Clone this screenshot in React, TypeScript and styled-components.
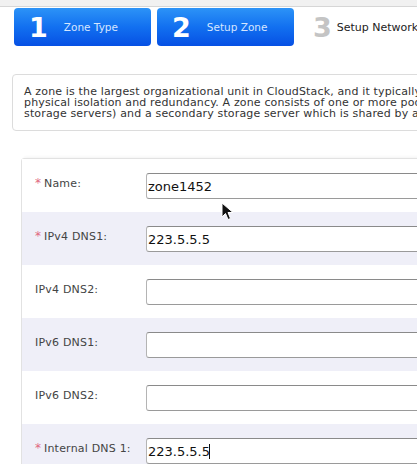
import React from "react";
import styled, { createGlobalStyle } from "styled-components";

const GlobalStyle = createGlobalStyle`
    html, body {
        margin: 0;
        padding: 0;
        background: #fff;
        overflow: hidden;
    }
    body {
        font-family: "DejaVu Sans", "Liberation Sans", sans-serif;
    }
`;

const PAGE = styled.div`
    position: relative;
    width: 640px;
    height: 464px;
    overflow: hidden;
`;
PAGE.displayName = "PAGE";

const TOP_STRIP = styled.div`
    height: 6px;
    background-color: #f1f1f1;
    border-bottom: 1px solid #d6d6d6;
`;
TOP_STRIP.displayName = "TOP_STRIP";

const STEPS = styled.div`
    display: flex;
    align-items: center;
    gap: 6px;
    padding: 1px 0 0 14px;
`;
STEPS.displayName = "STEPS";

interface IStep {
    active?: boolean;
}

const STEP = styled.div<IStep>`
    display: flex;
    align-items: center;
    box-sizing: border-box;
    width: 137px;
    height: 38px;
    padding-left: ${props => (props.active ? "15px" : "13px")};
    border-radius: 4px;
    background: ${props =>
        props.active ? "linear-gradient(to bottom, #2c93f7 0%, #1270f0 50%, #0650e4 100%)" : "transparent"};
    .num {
        font-size: 27px;
        font-weight: 700;
        line-height: 1;
        color: ${props => (props.active ? "#ffffff" : "#c4c4c4")};
        margin-right: ${props => (props.active ? "16px" : "5px")};
    }
    .label {
        font-size: ${props => (props.active ? "10.5px" : "11px")};
        color: ${props => (props.active ? "#d6e6ff" : "#222")};
        white-space: nowrap;
    }
`;
STEP.displayName = "STEP";

const DESCRIPTION = styled.div`
    margin: 28px 0 0 12px;
    padding: 11px 11px;
    border: 1px solid #dcdcdc;
    border-radius: 4px;
    font-size: 11px;
    letter-spacing: 0.15px;
    line-height: 11px;
    color: #333;
    white-space: nowrap;
`;
DESCRIPTION.displayName = "DESCRIPTION";

const FORM_PANEL = styled.div`
    margin: 27px 0 0 21px;
    border: 1px solid #e2e2e2;
    border-radius: 3px;
    box-shadow: 0 -4px 3px -3px #f3f3f3;
`;
FORM_PANEL.displayName = "FORM_PANEL";

interface IRow {
    shaded?: boolean;
}

const ROW = styled.div<IRow>`
    display: flex;
    align-items: center;
    height: 53px;
    padding-left: 13px;
    background-color: ${props => (props.shaded ? "#efeff8" : "#ffffff")};
`;
ROW.displayName = "ROW";

interface ILabel {
    required?: boolean;
}

const LABEL = styled.label<ILabel>`
    display: flex;
    align-items: center;
    box-sizing: border-box;
    width: 111px;
    padding-left: ${props => (props.required ? "9px" : "0")};
    position: relative;
    top: -2px;
    font-size: 11px;
    letter-spacing: 0.2px;
    color: #444;
    white-space: nowrap;
    .req {
        position: absolute;
        left: 0;
        top: -1px;
        color: #e0667e;
        font-size: 12px;
    }
`;
LABEL.displayName = "LABEL";

const INPUT_WRAP = styled.div`
    position: relative;
`;
INPUT_WRAP.displayName = "INPUT_WRAP";

const TEXT_INPUT = styled.input`
    box-sizing: border-box;
    width: 420px;
    height: 26px;
    padding: 1px 1px 0;
    border: 1px solid #b4b4b4;
    border-top-color: #8a8a8a;
    border-bottom-color: #9a9a9a;
    border-radius: 3px;
    font-family: "DejaVu Sans", sans-serif;
    font-size: 13px;
    color: #111;
    outline: none;
    background: #fff;
`;
TEXT_INPUT.displayName = "TEXT_INPUT";

const CARET = styled.span`
    position: absolute;
    left: 63px;
    top: 6px;
    width: 1px;
    height: 15px;
    background: #111;
`;
CARET.displayName = "CARET";

const POINTER = styled.svg`
    position: absolute;
    left: 221px;
    top: 202px;
`;
POINTER.displayName = "POINTER";

const fields = [
    { label: "Name:", required: true, value: "zone1452" },
    { label: "IPv4 DNS1:", required: true, value: "223.5.5.5" },
    { label: "IPv4 DNS2:", required: false, value: "" },
    { label: "IPv6 DNS1:", required: false, value: "" },
    { label: "IPv6 DNS2:", required: false, value: "" },
    { label: "Internal DNS 1:", required: true, value: "223.5.5.5", caret: true },
];

export default function App() {
    return (
        <PAGE>
            <GlobalStyle />
            <TOP_STRIP />
            <STEPS>
                <STEP active>
                    <span className="num">1</span>
                    <span className="label">Zone Type</span>
                </STEP>
                <STEP active>
                    <span className="num">2</span>
                    <span className="label">Setup Zone</span>
                </STEP>
                <STEP>
                    <span className="num">3</span>
                    <span className="label">Setup Network</span>
                </STEP>
            </STEPS>
            <DESCRIPTION>
                A zone is the largest organizational unit in CloudStack, and it typically corresponds to a single datacenter. Zones provide
                <br />
                physical isolation and redundancy. A zone consists of one or more pods (each of which contains hosts and primary
                <br />
                storage servers) and a secondary storage server which is shared by all pods in the zone.
            </DESCRIPTION>
            <FORM_PANEL>
                {fields.map((f, i) => (
                    <ROW key={f.label} shaded={i % 2 === 1}>
                        <LABEL required={f.required}>
                            {f.required && <span className="req">*</span>}
                            {f.label}
                        </LABEL>
                        <INPUT_WRAP>
                            <TEXT_INPUT type="text" defaultValue={f.value} readOnly />
                            {f.caret && <CARET />}
                        </INPUT_WRAP>
                    </ROW>
                ))}
            </FORM_PANEL>
            <POINTER width="13" height="19" viewBox="0 0 13 19">
                <path d="M1 1 L1 15 L4.5 11.5 L7 17.5 L9.5 16.5 L7 10.5 L12 10.5 Z" fill="#111" stroke="#fff" strokeWidth="1" />
            </POINTER>
        </PAGE>
    );
}
